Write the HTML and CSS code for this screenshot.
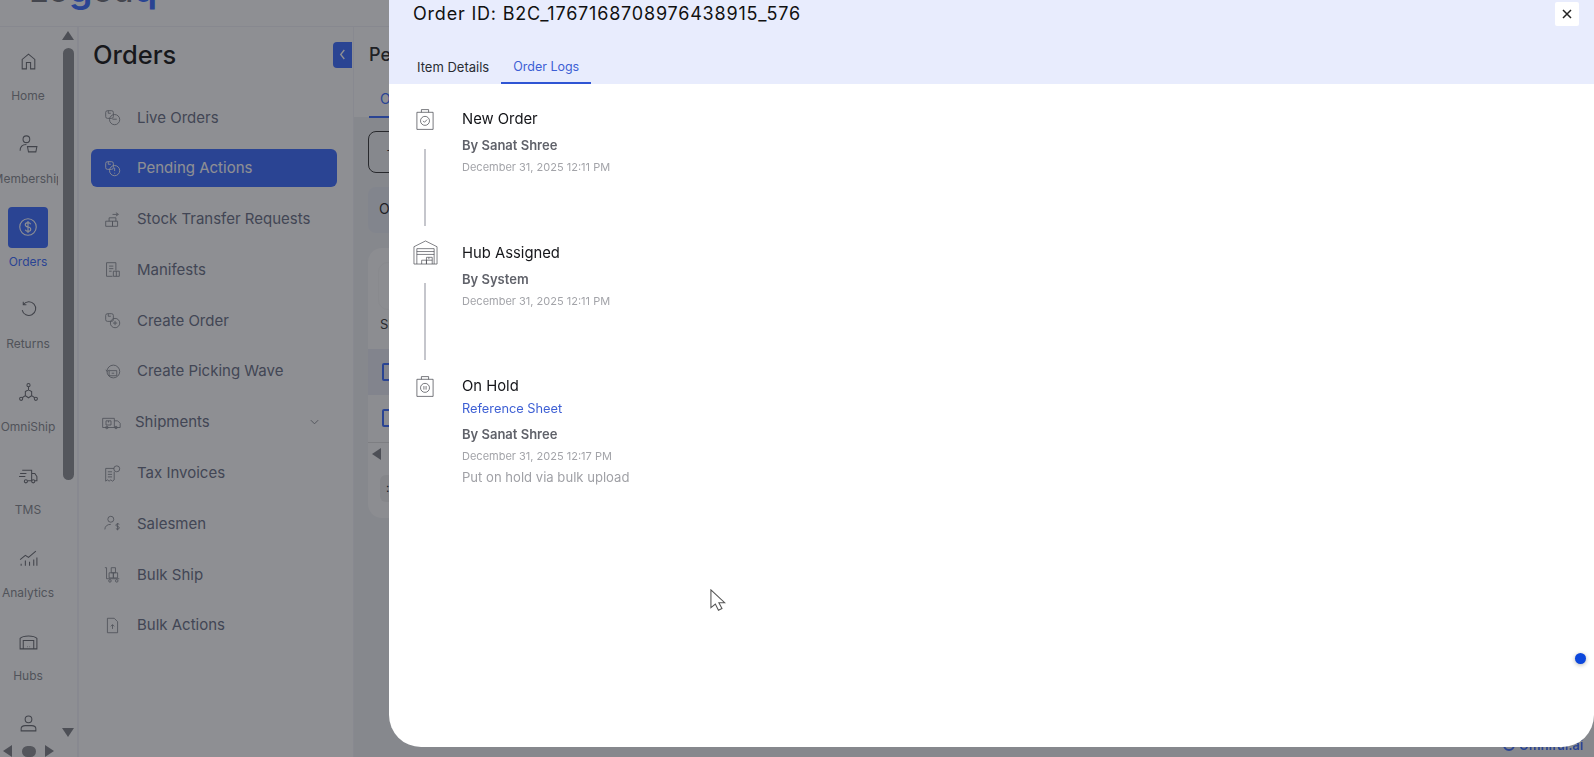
FILE: index.html
```html
<!DOCTYPE html>
<html lang="en">
<head>
<meta charset="utf-8">
<title>Order logs</title>
<link rel="stylesheet" href="styles.css">
</head>
<body>
<div class="app">
  <header class="topbar"><div class="logo">Lo<span class="logo-blue">g</span>ou<span class="logo-blue">q</span></div></header>
  <div class="main">
    <nav class="rail">
      <div class="rail-list">
        <div class="rail-item"><span class="rail-icon"><svg viewBox="0 0 20 20"><path d="M4 17V8l6-5 6 5v9h-4v-6H8v6z"/></svg></span><span class="rail-label">Home</span></div>
        <div class="rail-item"><span class="rail-icon"><svg viewBox="0 0 20 20"><circle cx="8" cy="5" r="3.2"/><path d="M2 16c0-4 2.500-6 6-6M9 12h9l-1 5H10z"/></svg></span><span class="rail-label">Membership</span></div>
        <div class="rail-item active"><span class="rail-icon"><svg viewBox="0 0 20 20"><circle cx="10" cy="10" r="7.500"/><path d="M12.500 7.500c-.5-1-1.500-1.500-2.500-1.500-1.500 0-2.500.8-2.500 2s1 1.800 2.500 2 2.500.8 2.500 2-1 2-2.500 2c-1 0-2-.5-2.500-1.500M10 4.500v11"/></svg></span><span class="rail-label">Orders</span></div>
        <div class="rail-item"><span class="rail-icon"><svg viewBox="0 0 20 20"><path d="M5 5.500a6.500 6.500 0 1 1-1 5M5 2.500v3h3"/></svg></span><span class="rail-label">Returns</span></div>
        <div class="rail-item"><span class="rail-icon"><svg viewBox="0 0 20 20"><circle cx="10" cy="3" r="1.500"/><circle cx="3" cy="16" r="1.500"/><circle cx="17" cy="16" r="1.500"/><path d="M10 4.500V8M4 15l3-2M16 15l-3-2M7 9l3-1.500L13 9v4l-3 2-3-2z"/></svg></span><span class="rail-label">OmniShip</span></div>
        <div class="rail-item"><span class="rail-icon"><svg viewBox="0 0 20 20"><path d="M4 5h9v10H9M13 8h3l2 3v4h-2M2 8h6M1 11h6"/><circle cx="7.500" cy="15.500" r="1.500"/><circle cx="14.500" cy="15.500" r="1.500"/></svg></span><span class="rail-label">TMS</span></div>
        <div class="rail-item"><span class="rail-icon"><svg viewBox="0 0 20 20"><path d="M2 11l5-4 3 2 7-6M3 17v-2M7 17v-5M11 17v-4M15 17v-6M18 17V9"/></svg></span><span class="rail-label">Analytics</span></div>
        <div class="rail-item"><span class="rail-icon"><svg viewBox="0 0 20 20"><path d="M2 17V7c3-3 13-3 16 0v10zM5 17V9h10v8M9 15h.5M11 15h.5"/></svg></span><span class="rail-label">Hubs</span></div>
        <div class="rail-item"><span class="rail-icon"><svg viewBox="0 0 20 20"><circle cx="10" cy="6" r="3.200"/><path d="M3 17v-2c0-2 2-3 4-3h6c2 0 4 1 4 3v2z"/></svg></span><span class="rail-label">Profile</span></div>
      </div>
      <div class="vscroll">
        <span class="tri tri-up"></span>
        <span class="vthumb"></span>
        <span class="tri tri-down"></span>
      </div>
      <div class="hscroll">
        <span class="tri tri-left"></span>
        <span class="hthumb"></span>
        <span class="tri tri-right"></span>
      </div>
    </nav>
    <aside class="side">
      <div class="side-head"><h1 class="side-title">Orders</h1><button class="collapse"><svg viewBox="0 0 10 14"><path d="M7 2L3 7l4 5"/></svg></button></div>
      <ul class="side-list">
        <li class="side-item"><svg viewBox="0 0 20 20"><rect x="2" y="2" width="9" height="9" rx="2"/><circle cx="12.500" cy="12.500" r="6"/><path d="M5 2v3h3M10 12h5"/></svg>Live Orders</li>
        <li class="side-item active"><svg viewBox="0 0 20 20"><rect x="2" y="2" width="9" height="9" rx="2"/><circle cx="12.500" cy="12.500" r="6"/><path d="M5 2v3h3M12.500 9v4M12.500 15v1"/></svg>Pending Actions</li>
        <li class="side-item"><svg viewBox="0 0 20 20"><path d="M2 12h8v6H2zM10 12h6v6h-6zM6 12V8h8v4M10 4h6M14 2l3 2-3 2"/></svg>Stock Transfer Requests</li>
        <li class="side-item"><svg viewBox="0 0 20 20"><path d="M3 2h11v9M3 2v16h7M6 6h5M6 9h5M6 12h3M11 12h7v6h-7zM14.500 12v6"/></svg>Manifests</li>
        <li class="side-item"><svg viewBox="0 0 20 20"><rect x="2" y="2" width="9" height="9" rx="2"/><circle cx="13" cy="13" r="5.500"/><path d="M5 2v3h3M10.500 13h5M13 10.500v5"/></svg>Create Order</li>
        <li class="side-item"><svg viewBox="0 0 20 20"><circle cx="11" cy="10" r="7.500"/><path d="M6 9h9v6H6zM2 8l2 2 2-2M9 12h3"/></svg>Create Picking Wave</li>
        <li class="side-item sub"><svg viewBox="0 0 24 20"><path d="M2 5h14v11H2zM16 8h4l3 3v5h-7M6 8h6v5H6zM9 8v2"/><circle cx="7" cy="16" r="1.500"/><circle cx="18" cy="16" r="1.500"/></svg>Shipments<svg class="chev" viewBox="0 0 12 8"><path d="M2 2l4 4 4-4"/></svg></li>
        <li class="side-item"><svg viewBox="0 0 20 20"><path d="M12 4H2v15l2-1.500 2 1.500 2-1.500 2 1.500 2-1.500V8M4.500 8h5M4.500 11h5M4.500 14h5"/><circle cx="15" cy="4.500" r="3.500"/></svg>Tax Invoices</li>
        <li class="side-item"><svg viewBox="0 0 20 20"><circle cx="8" cy="5" r="3.500"/><path d="M1 17c0-4 3-6 7-6M18 11c-1-1-4-1-4 1s4 1 4 3-3 2-4 1M16 9.500V18"/></svg>Salesmen</li>
        <li class="side-item"><svg viewBox="0 0 20 20"><path d="M1 2h2v13h15M6 8h5v6H6zM11 8h5v6h-5zM8.500 2h5v6h-5z"/><circle cx="7" cy="17.500" r="1.500"/><circle cx="15" cy="17.500" r="1.500"/></svg>Bulk Ship</li>
        <li class="side-item"><svg viewBox="0 0 20 20"><path d="M4 1.500h8l4 4v13H4zM10 14V9M8 11l2-2 2 2"/></svg>Bulk Actions</li>
      </ul>
    </aside>
    <section class="content">
      <div class="content-head">
        <h2 class="page-title">Pending Actions</h2>
        <div class="page-tabs"><span class="page-tab">Orders</span></div>
      </div>
      <div class="content-body">
        <div class="filter-btn">+ Add Filter</div>
        <div class="info-row">Orders</div>
        <div class="card">
          <div class="card-top"><span class="round-box"></span></div>
          <div class="card-label">Show</div>
          <div class="card-row selected"><span class="check"></span></div>
          <div class="card-row"><span class="check"></span></div>
          <div class="card-foot"><span class="tri tri-left"></span></div>
          <div class="card-pager">:</div>
        </div>
      </div>
    </section>
  </div>
</div>
<div class="overlay"></div>
<div class="footer-brand"><span class="brand-mark"></span>Omniful.ai</div>
<div class="modal">
  <div class="modal-head">
    <div class="modal-title">Order ID: B2C_1767168708976438915_576</div>
    <button class="close"><svg viewBox="0 0 12 12"><path d="M2 2l8 8M10 2l-8 8"/></svg></button>
    <div class="modal-tabs"><span class="modal-tab">Item Details</span><span class="modal-tab current">Order Logs</span></div>
  </div>
  <div class="logs">
    <div class="log">
      <div class="log-mark">
        <svg class="log-icon" viewBox="0 0 20 24"><path d="M1 4h18v19H1zM6 4V1h8v3"/><circle cx="10" cy="13.500" r="5"/><path d="M7.800 13.500l1.600 1.600 2.900-3"/></svg>
        <span class="log-line"></span>
      </div>
      <div class="log-text">
        <div class="log-title">New Order</div>
        <div class="log-by">By Sanat Shree</div>
        <div class="log-date">December 31, 2025 12:11 PM</div>
      </div>
    </div>
    <div class="log">
      <div class="log-mark">
        <svg class="log-icon wide" viewBox="0 0 26 26"><path d="M1 25V7l12-6 12 6v18zM4 25V9h18v16M4 12h18M4 15h18M9 25v-4h5v4M14 25v-7h6v7M14 21h6M16.500 18v2"/></svg>
        <span class="log-line"></span>
      </div>
      <div class="log-text">
        <div class="log-title">Hub Assigned</div>
        <div class="log-by">By System</div>
        <div class="log-date">December 31, 2025 12:11 PM</div>
      </div>
    </div>
    <div class="log">
      <div class="log-mark">
        <svg class="log-icon" viewBox="0 0 20 24"><path d="M1 4h18v19H1zM6 4V1h8v3"/><circle cx="10" cy="13.500" r="5"/><path d="M8.800 11.500v4M11.200 11.500v4"/></svg>
      </div>
      <div class="log-text">
        <div class="log-title">On Hold</div>
        <a class="log-link">Reference Sheet</a>
        <div class="log-by">By Sanat Shree</div>
        <div class="log-date">December 31, 2025 12:17 PM</div>
        <div class="log-note">Put on hold via bulk upload</div>
      </div>
    </div>
  </div>
  <svg class="cursor" viewBox="0 0 18 26"><path d="M1 1v20l5-4 3.500 7 4-2-3.500-6.500h6.500z"/></svg>
  <span class="dot"></span>
</div>
</body>
</html>
```
FILE: styles.css
```css
* { box-sizing: border-box; }
html, body { margin: 0; height: 100%; overflow: hidden; }
body { font-family: Inter, "Open Sans", sans-serif; background: #fff; color: #1e2028; }
svg { fill: none; stroke: currentColor; stroke-width: 1; }

.app { height: 757px; display: flex; flex-direction: column; background: #fff; }
.topbar { height: 27px; flex: none; border-bottom: 1px solid #f0f1f6; overflow: hidden; padding-left: 29px; }
.logo { font-size: 34px; font-weight: 500; line-height: 40px; margin-top: -32px; color: #6a6d75; white-space: nowrap; }
.logo-blue { color: #3668ff; font-weight: 600; font-size: 38px; }

.main { flex: 1; display: flex; min-height: 0; }

.rail { width: 79px; flex: none; position: relative; border-right: 2px solid #f2f3f8; overflow: hidden; }
.rail-list { width: 58px; height: 717px; overflow: hidden; padding: 14px 2px 0 0; }
.rail-item { height: 82.800px; display: flex; flex-direction: column; align-items: center; }
.rail-icon { width: 40px; height: 41px; border-radius: 4px; display: flex; align-items: center; justify-content: center; color: #65676d; flex: none; }
.rail-icon svg { width: 21px; height: 21px; }
.rail-label { font-size: 12px; margin-top: 6px; line-height: 16px; color: #84878c; white-space: nowrap; }
.rail-item.active .rail-icon { background: #3668ff; color: #fff; }
.rail-item.active .rail-icon svg { width: 22px; height: 22px; }
.rail-item.active .rail-label { color: #3668ff; }

.vscroll { position: absolute; left: 62px; top: 0; width: 12px; height: 710px; display: flex; flex-direction: column; align-items: center; padding-top: 4px; }
.vthumb { width: 11px; height: 432px; background: #8a8c90; border-radius: 6px; margin-top: 8px; flex: none; }
.tri { width: 0; height: 0; display: block; flex: none; border-style: solid; border-color: transparent; }
.tri-up { border-width: 0 6px 9px; border-bottom-color: #7d7f84; }
.tri-down { border-width: 9px 6px 0; border-top-color: #7d7f84; margin-top: auto; }
.tri-left { border-width: 6px 9px 6px 0; border-right-color: #7d7f84; }
.tri-right { border-width: 6px 0 6px 9px; border-left-color: #7d7f84; }
.hscroll { position: absolute; left: 3px; top: 718px; width: 51px; height: 12px; display: flex; align-items: center; justify-content: space-between; }
.hthumb { width: 14px; height: 11px; border-radius: 6px; background: #8a8c90; }

.side { width: 274px; flex: none; padding: 0 16px 0 12px; position: relative; }
.side-head { height: 55px; display: flex; align-items: center; justify-content: space-between; margin: 0 -15px 0 2px; }
.side-title { font-size: 25.500px; font-weight: 500; margin: 0; color: #111; }
.collapse { width: 19px; height: 26px; border: 0; padding: 0; background: #3668ff; color: #fff; border-radius: 4px 0 0 4px; display: flex; align-items: center; justify-content: center; }
.collapse svg { width: 9px; height: 13px; stroke-width: 1.500; }
.side-list { list-style: none; margin: 16.500px 0 0; padding: 0; }
.side-item { height: 38px; margin-bottom: 12.800px; display: flex; align-items: center; padding-left: 13px; font-size: 15px; line-height: 20px; color: #666c82; border-radius: 6px; white-space: nowrap; }
.side-item svg { width: 17px; height: 17px; margin-right: 16px; flex: none; color: #80838a; }
.side-item.active { background: #3668ff; color: #fff; }
.side-item.active svg { color: #fff; }
.side-item.sub { padding-left: 10px; }
.side-item.sub svg:first-child { width: 20px; margin-right: 14px; }
.side-item .chev { width: 11px; height: 8px; margin: 0 15px 0 auto; position: relative; left: -2px; }

.content { flex: 1; display: flex; flex-direction: column; min-width: 0; background: #eef0f2; border-left: 1px solid #f2f3f8; }
.content-head { background: #fff; height: 90px; padding: 16px 0 0 15px; flex: none; }
.page-title { font-size: 18px; font-weight: 500; margin: 0; line-height: 24px; color: #222; }
.page-tabs { margin-top: 21px; }
.page-tab { display: inline-block; font-size: 14px; color: #3668ff; padding: 0 11px 0; border-bottom: 2px solid #3668ff; line-height: 20px; height: 29px; }
.content-body { padding: 14px 0 0 14px; flex: 1; min-height: 0; }
.filter-btn { height: 42px; border: 1px solid #333; border-radius: 8px; padding: 10px 17px; font-size: 14px; white-space: nowrap; width: 300px; }
.info-row { margin-top: 14px; height: 46px; background: #e7eaf2; border-radius: 8px; padding: 13px 11px; font-size: 14px; color: #222; }
.card { margin-top: 15px; height: 270px; background: #fafafa; border-radius: 14px; padding-top: 14px; }
.card-top { height: 38px; padding-left: 10px; }
.round-box { display: block; width: 60px; height: 48px; border: 1px solid #f4f4f4; border-radius: 10px; }
.card-label { margin-top: 16px; padding-left: 12px; font-size: 13px; color: #333; }
.card-row { height: 46px; padding: 14px 0 0 14px; }
.card-row.selected { margin-top: 17px; background: #e6e9f2; height: 46px; }
.check { display: block; width: 40px; height: 18px; border: 2px solid #3668ff; border-radius: 2px; }
.card-foot { height: 22px; border-top: 1px solid #ddd; padding: 5px 0 0 4px; margin-top: 1px; }
.card-pager { width: 60px; height: 27px; margin: 11px 0 0 12px; background: #ececec; border-radius: 6px; font-size: 12px; padding: 5px 0 0 6px; }

.overlay { position: fixed; inset: 0; background: rgba(30, 32, 40, .5); }
.footer-brand { position: fixed; left: 1503px; top: 737px; display: flex; gap: 4px; align-items: center; font-size: 13px; font-weight: 600; line-height: 16px; color: #2a4494; }
.brand-mark { width: 12px; height: 12px; border: 2px solid #2a4494; border-radius: 50%; }

.modal { position: fixed; left: 389px; top: 0; right: 0; height: 747px; background: #fff; border-radius: 0 0 32px 32px; overflow: hidden; }
.modal-head { height: 84px; background: #e8ecfd; position: relative; padding: 3px 0 0 24px; }
.modal-title { font-size: 18px; line-height: 22px; color: #111; white-space: nowrap; letter-spacing: .8px; }
.close { position: absolute; right: 15px; top: 2px; width: 24px; height: 24px; border: 0; padding: 0; background: #fff; border-radius: 2px; display: flex; align-items: center; justify-content: center; color: #222; }
.close svg { width: 12px; height: 12px; stroke-width: 1.500; }
.modal-tabs { display: flex; margin: 30px 0 0 -8px; }
.modal-tab { font-size: 13px; line-height: 20px; padding: 2px 12px 5px; color: #2a2c33; border-bottom: 2px solid transparent; }
.modal-tab.current { font-size: 12.500px; color: #3d5fd4; border-bottom-color: #2f55d4; }

.logs { padding: 24px 0 0 24px; }
.log { display: flex; height: 133.500px; }
.log-mark { width: 24px; margin-right: 25px; display: flex; flex-direction: column; align-items: center; color: #44464d; flex: none; }
.log-icon { width: 18px; height: 23px; flex: none; stroke-width: .8; }
.log-icon.wide { width: 25px; height: 25px; margin-top: -2px; stroke-width: .7; }
.log-line { width: 1.500px; height: 77px; background: #c5c6cc; margin-top: 18px; flex: none; }
.log-title { font-size: 14.800px; line-height: 22px; font-weight: 400; color: #15161a; }
.log-by { font-size: 13px; font-weight: 600; color: #60626a; line-height: 18px; margin-top: 6px; }
.log-date { font-size: 11px; color: #a3a4a9; line-height: 16px; margin-top: 5px; }
.log-link { display: block; font-size: 12.800px; line-height: 18px; color: #3d5fd4; margin-top: 3px; }
.log-link + .log-by { margin-top: 7px; }
.log-note { font-size: 13.100px; line-height: 18px; color: #a0a1a6; margin-top: 4px; }

.cursor { position: absolute; left: 321px; top: 589px; width: 16px; height: 23px; fill: #fff; stroke: #555; stroke-width: 1.200; }
.dot { position: absolute; right: 8px; top: 653px; width: 11px; height: 11px; border-radius: 50%; background: #0c47dc; box-shadow: 0 1px 4px rgba(0, 0, 0, .3); }
```
